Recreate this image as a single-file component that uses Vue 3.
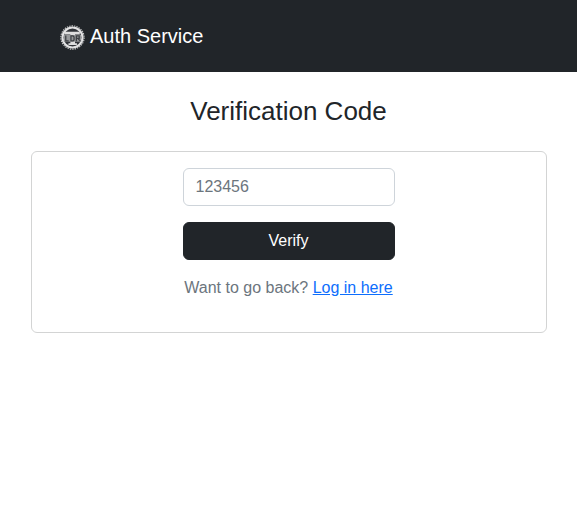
<script setup>
import { ref } from 'vue'

const code = ref('')
</script>

<template>
  <header class="navbar">
    <a class="brand" href="#">
      <svg class="logo" viewBox="0 0 26 26" aria-hidden="true">
        <circle cx="13" cy="13" r="12.1" fill="none" stroke="#c4c5c6" stroke-width="1.2" stroke-dasharray="1.5 1.03" />
        <circle cx="13" cy="13" r="10.4" fill="#303338" stroke="#e2e2e3" stroke-width="2.2" />
        <path d="M4.6 7h16v3h-5v9h2v1.8H8.8V19h2v-9H4.6z" fill="#dedede" />
        <path d="M4 10.4h18v7H4z" fill="#96989a" />
        <path d="M6 11v5.6h3M11.4 16.6V11.4h2.2l1 1v3.2l-1 1zM17 17v-5.6h3v2.6h-2.6M18.8 14.2l2.4 2.6" fill="none" stroke="#3c3f43" stroke-width="1.3" />
      </svg>
      <span>Auth Service</span>
    </a>
  </header>
  <main class="page">
    <h1 class="title">Verification Code</h1>
    <section class="card">
      <form class="form" @submit.prevent>
        <input v-model="code" class="field" type="text" inputmode="numeric" placeholder="123456" aria-label="Verification code" />
        <button class="submit" type="submit">Verify</button>
        <p class="hint">Want to go back? <a class="link" href="#">Log in here</a></p>
      </form>
    </section>
  </main>
</template>

<style>
body {
  margin: 0;
  background: #fff;
}
</style>

<style scoped>
.navbar,
.page {
  font-family: "Liberation Sans", Arial, sans-serif;
  font-size: 16px;
  line-height: 24px;
  color: #212529;
}
.navbar {
  background: #212529;
  padding: 21px 60px;
}
.brand {
  display: flex;
  align-items: center;
  gap: 5px;
  color: #fff;
  font-size: 20px;
  line-height: 30px;
  text-decoration: none;
}
.logo {
  width: 25px;
  height: 25px;
  margin-top: 2px;
}
.page {
  max-width: 516px;
  margin: 0 auto;
  padding: 24px 16px;
}
.title {
  margin: 0 0 24px;
  font-size: 26px;
  line-height: 31px;
  font-weight: 400;
  text-align: center;
}
.card {
  border: 1px solid #d3d4d4;
  border-radius: 6px;
  padding: 16px;
}
.form {
  display: grid;
  gap: 16px;
  width: 212px;
  margin: 0 auto;
}
.field,
.submit {
  box-sizing: border-box;
  width: 100%;
  padding: 6px 12px;
  border-radius: 6px;
  font: inherit;
}
.field {
  border: 1px solid #ced4da;
  background: #fff;
  color: #212529;
}
.field::placeholder {
  color: #6c757d;
  opacity: 1;
}
.submit {
  border: 1px solid #212529;
  background: #212529;
  color: #fff;
  cursor: pointer;
}
.hint {
  margin: 0 0 16px;
  color: #6c757d;
  text-align: center;
  white-space: nowrap;
}
.link {
  color: #0d6efd;
}
</style>
